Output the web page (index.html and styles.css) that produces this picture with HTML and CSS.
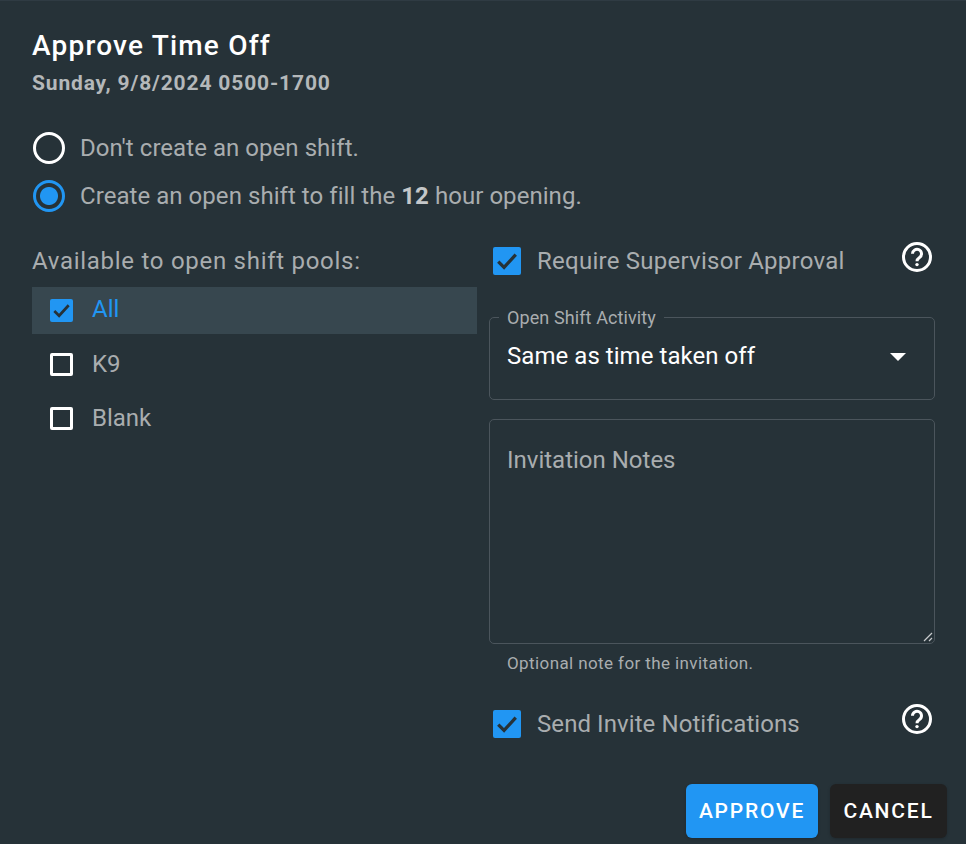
FILE: index.html
```html
<!DOCTYPE html>
<html lang="en">
<head>
    <meta charset="UTF-8">
    <meta name="viewport" content="width=device-width, initial-scale=1.0">
    <title>Approve Time Off</title>
    <link rel="stylesheet" href="styles.css">
</head>
<body>
    <div class="dialog">
        <div class="header">
            <h1>Approve Time Off</h1>
            <h2>Sunday, 9/8/2024 0500-1700</h2>
        </div>

        <div class="radios">
            <div class="radio-row">
                <span class="radio"></span>
                <span>Don't create an open shift.</span>
            </div>
            <div class="radio-row">
                <span class="radio on"></span>
                <span>Create an open shift to fill the <b>12</b> hour opening.</span>
            </div>
        </div>

        <div class="columns">
            <div class="left">
                <div class="pool-title">Available to open shift pools:</div>
                <div class="pool selected">
                    <span class="box on small"><svg viewBox="0 0 24 24"><path d="M4.5 12.5l5 5 10-11"/></svg></span>
                    <span class="pool-name">All</span>
                </div>
                <div class="pool">
                    <span class="box small"></span>
                    <span>K9</span>
                </div>
                <div class="pool">
                    <span class="box small"></span>
                    <span>Blank</span>
                </div>
            </div>

            <div class="right">
                <div class="check-row first">
                    <span class="box on"><svg viewBox="0 0 24 24"><path d="M4.5 12.5l5 5 10-11"/></svg></span>
                    <span class="check-label">Require Supervisor Approval</span>
                    <svg class="help" viewBox="0 0 32 32"><circle cx="16" cy="16" r="13.5"/><path d="M11.5 12.8a4.5 4.5 0 1 1 7 3.7c-1.6 1.1-2.5 2-2.5 3.7"/><circle class="dot" cx="16" cy="23.6" r="1.7"/></svg>
                </div>

                <div class="select-field">
                    <span class="legend">Open Shift Activity</span>
                    <span class="select-value">Same as time taken off</span>
                    <span class="caret"></span>
                </div>

                <div class="notes-field">
                    <span class="notes-label">Invitation Notes</span>
                    <svg class="grip" viewBox="0 0 10 10"><path d="M1 9l8-8M6 9l3-3"/></svg>
                </div>
                <div class="hint">Optional note for the invitation.</div>

                <div class="check-row last">
                    <span class="box on"><svg viewBox="0 0 24 24"><path d="M4.5 12.5l5 5 10-11"/></svg></span>
                    <span class="check-label">Send Invite Notifications</span>
                    <svg class="help" viewBox="0 0 32 32"><circle cx="16" cy="16" r="13.5"/><path d="M11.5 12.8a4.5 4.5 0 1 1 7 3.7c-1.6 1.1-2.5 2-2.5 3.7"/><circle class="dot" cx="16" cy="23.6" r="1.7"/></svg>
                </div>
            </div>
        </div>

        <div class="actions">
            <button class="btn approve">APPROVE</button>
            <button class="btn cancel">CANCEL</button>
        </div>
    </div>
</body>
</html>
```

FILE: styles.css
```css
html, body {
    margin: 0;
    padding: 0;
}
body {
    background-color: #263238;
    color: #a9adaf;
    font-family: Roboto, "Liberation Sans", sans-serif;
    font-size: 24px;
}
.dialog {
    width: 966px;
    height: 844px;
    box-sizing: border-box;
    padding: 29px 19px 0 32px;
    border-top: 1px solid #2f3b43;
    overflow: hidden;
}
.header h1 {
    margin: 0;
    font-size: 28px;
    line-height: 32px;
    font-weight: 500;
    color: #fff;
    letter-spacing: 1.2px;
}
.header h2 {
    margin: 8px 0 0;
    font-size: 21px;
    line-height: 26px;
    font-weight: 700;
    color: #b4b8ba;
    letter-spacing: 0.85px;
}
.radios {
    margin-top: 28px;
}
.radio-row {
    display: flex;
    align-items: center;
    gap: 15px;
    height: 48px;
    letter-spacing: 0.05px;
}
.radio-row b {
    font-weight: 700;
    color: #c4c7c9;
}
.radio {
    width: 32px;
    height: 32px;
    margin-left: 1px;
    box-sizing: border-box;
    border: 3px solid #fff;
    border-radius: 50%;
}
.radio.on {
    border-color: #2196f3;
    background: radial-gradient(circle, #2196f3 0 8.5px, transparent 9.5px);
}
.columns {
    display: flex;
    gap: 12px;
    margin-top: 19px;
    height: 545px;
}
.left {
    width: 445px;
}
.pool-title {
    line-height: 44px;
    margin-bottom: 4px;
    letter-spacing: 0.72px;
}
.pool {
    display: flex;
    align-items: center;
    gap: 19px;
    height: 54px;
    padding-left: 18px;
}
.pool.selected {
    height: 47px;
    margin-bottom: 3px;
    background-color: #37474f;
    color: #2196f3;
}
.pool-name {
    margin-bottom: 3px;
}
.box {
    display: block;
    flex: none;
    width: 28px;
    height: 28px;
    box-sizing: border-box;
    border-radius: 2px;
}
.box.small {
    width: 23px;
    height: 23px;
    border: 3px solid #fff;
}
.box.on {
    background-color: #2196f3;
    border: 0;
}
.box svg {
    display: block;
    width: 100%;
    height: 100%;
    fill: none;
    stroke: #263238;
    stroke-width: 2.8;
}
.right {
    width: 446px;
}
.check-row {
    display: flex;
    align-items: center;
    height: 44px;
    padding-left: 4px;
    position: relative;
}
.check-label {
    margin-left: 16px;
    letter-spacing: 0.25px;
}
.last .check-label {
    letter-spacing: 0.08px;
}
.help {
    position: absolute;
    right: 2px;
    top: 2px;
    width: 32px;
    height: 32px;
    fill: none;
    stroke: #fff;
    stroke-width: 3;
}
.last .help {
    top: 1px;
}
.help .dot {
    fill: #fff;
    stroke: none;
}
.select-field {
    position: relative;
    display: flex;
    justify-content: space-between;
    box-sizing: border-box;
    height: 83px;
    margin-top: 34px;
    padding: 24px 28px 0 17px;
    border: 1px solid #4b555c;
    border-radius: 5px;
    color: #fff;
}
.legend {
    position: absolute;
    left: 9px;
    top: -10px;
    padding: 0 8px;
    font-size: 18px;
    line-height: 20px;
    letter-spacing: 0.1px;
    color: #a9adaf;
    background-color: #263238;
}
.select-value {
    line-height: 28px;
    letter-spacing: 0.05px;
}
.caret {
    width: 0;
    height: 0;
    margin-top: 11px;
    border-left: 8px solid transparent;
    border-right: 8px solid transparent;
    border-top: 8px solid #fff;
}
.notes-field {
    position: relative;
    box-sizing: border-box;
    height: 225px;
    margin-top: 19px;
    padding: 26px 17px 0;
    border: 1px solid #4b555c;
    border-radius: 5px;
}
.notes-label {
    line-height: 28px;
}
.grip {
    position: absolute;
    right: 1px;
    bottom: 1px;
    width: 10px;
    height: 10px;
    fill: none;
    stroke: #c8cbcd;
    stroke-width: 1.2;
}
.hint {
    margin-top: 8px;
    padding-left: 18px;
    font-size: 17px;
    line-height: 22px;
    letter-spacing: 0.4px;
}
.check-row.last {
    margin-top: 28px;
}
.actions {
    display: flex;
    justify-content: flex-end;
    gap: 12px;
}
.btn {
    height: 54px;
    border: 0;
    border-radius: 6px;
    color: #fff;
    font-family: inherit;
    font-size: 21px;
    font-weight: 500;
    letter-spacing: 1.8px;
    box-shadow: 0 1px 3px rgba(0, 0, 0, 0.2);
}
.approve {
    width: 132px;
    background-color: #2196f3;
}
.cancel {
    width: 117px;
    background-color: #212121;
}
```
